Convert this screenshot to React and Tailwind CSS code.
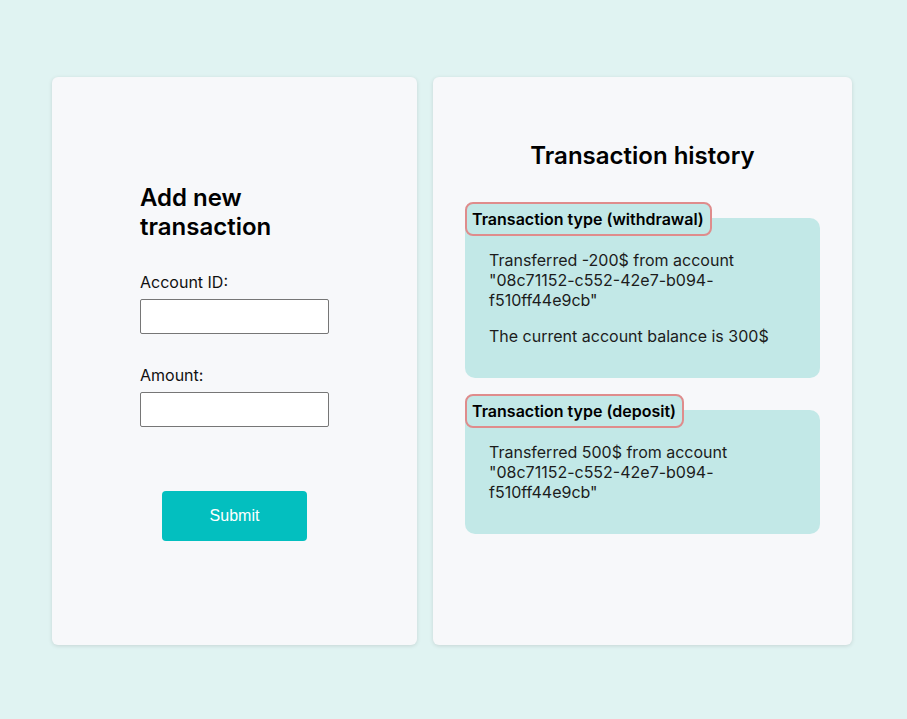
export default function App() {
  const font = { fontFamily: "Inter, 'Noto Sans', sans-serif" };
  return (
    <div className="min-h-[719px] w-full bg-[#e0f3f2] pt-[77px] pb-[74px]" style={font}>
      <div className="ml-[52px] flex gap-4">
        <div className="flex h-[568px] w-[365px] items-center justify-center rounded-md bg-[#f7f8fa] shadow-[0_1px_4px_rgba(0,0,0,0.12)]">
          <form className="flex w-[189px] flex-col pt-0.5" onSubmit={(e) => e.preventDefault()}>
            <h2 className="mb-8 text-[24px] font-semibold leading-[29px] text-black">Add new transaction</h2>
            <label className="mb-2 block text-[16px] leading-[18px] text-[#111]">Account ID:</label>
            <input className="h-[35px] w-[189px] rounded-[2px] border border-[#767676] bg-white px-1" />
            <label className="mt-8 mb-2 block text-[16px] leading-[18px] text-[#111]">Amount:</label>
            <input className="h-[35px] w-[189px] rounded-[2px] border border-[#767676] bg-white px-1" />
            <button
              type="submit"
              className="mx-auto mt-16 h-[50px] w-[145px] rounded-[4px] bg-[#03bfbf] text-[16px] text-white"
              style={{ fontFamily: "'Liberation Sans', Arial, sans-serif" }}
            >
              Submit
            </button>
          </form>
        </div>
        <div className="flex h-[568px] w-[419px] flex-col rounded-md bg-[#f7f8fa] px-8 pt-[63px] shadow-[0_1px_4px_rgba(0,0,0,0.12)]">
          <h2 className="text-center text-[24px] font-semibold leading-[32px] text-black">Transaction history</h2>
          <div className="mt-[46px] flex flex-col gap-8">
            <div className="relative rounded-[10px] bg-[#c2e8e7] py-8 pl-6 pr-6 text-[16px] leading-[20px] text-[#1c1c1c]">
              <div className="absolute left-0 top-[-16px] flex h-[34px] items-center rounded-[8px] border-2 border-[#df8c8c] bg-[#c2e8e7] pl-[5px] pr-1.5 text-[16px] font-semibold text-black">
                Transaction type (withdrawal)
              </div>
              <p>Transferred -200$ from account "08c71152-c552-42e7-b094-f510ff44e9cb"</p>
              <p className="mt-4">The current account balance is 300$</p>
            </div>
            <div className="relative rounded-[10px] bg-[#c2e8e7] py-8 pl-6 pr-6 text-[16px] leading-[20px] text-[#1c1c1c]">
              <div className="absolute left-0 top-[-16px] flex h-[34px] items-center rounded-[8px] border-2 border-[#df8c8c] bg-[#c2e8e7] pl-[5px] pr-1.5 text-[16px] font-semibold text-black">
                Transaction type (deposit)
              </div>
              <p>Transferred 500$ from account "08c71152-c552-42e7-b094-f510ff44e9cb"</p>
            </div>
          </div>
        </div>
      </div>
    </div>
  );
}
